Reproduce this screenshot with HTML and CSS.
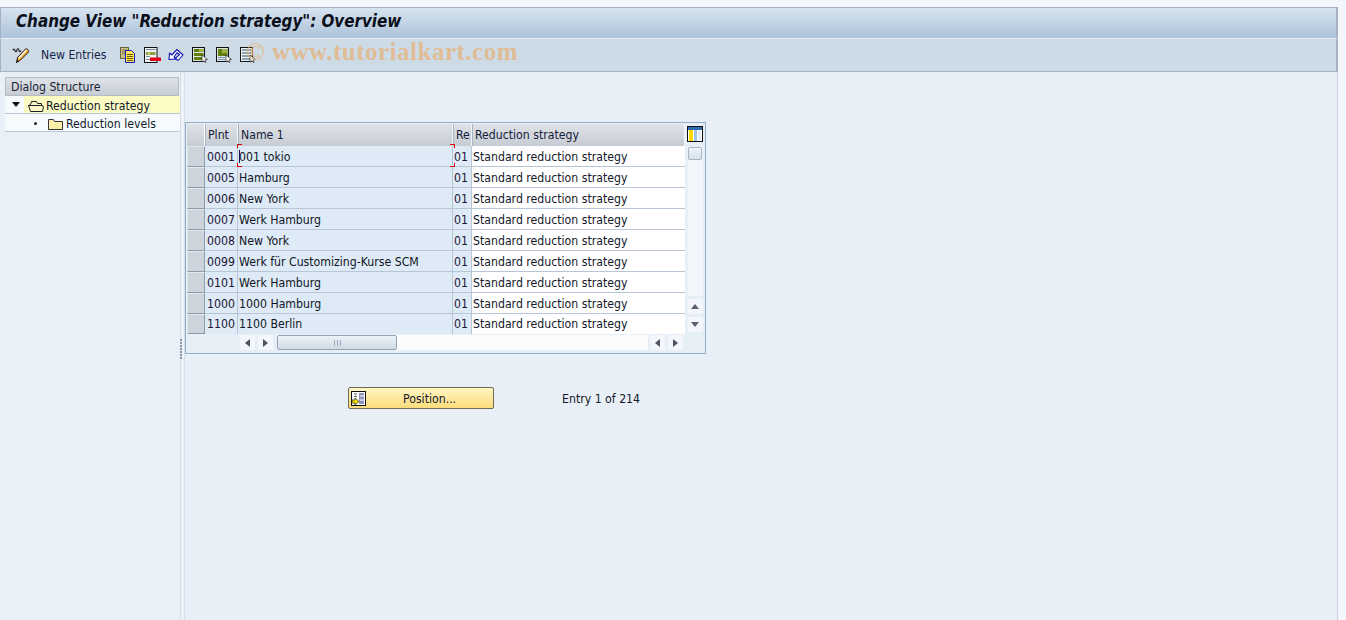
FILE: index.html
```html
<!DOCTYPE html>
<html lang="en">
<head>
<meta charset="utf-8">
<title>Change View "Reduction strategy": Overview</title>
<link rel="stylesheet" href="styles.css">
</head>
<body>
<div class="window">
  <header class="titlebar"><h1>Change View "Reduction strategy": Overview</h1></header>
  <div class="toolbar">
    <svg class="ico pencil" width="18" height="18" viewBox="0 0 18 18"><path d="M4.500 16.500l1-5 8-8.500c1-1 4 1.500 3 3l-8 8z" fill="#f7a928" stroke="#1a1a1a"/><path d="M6.500 11.500l7.500-8 1 1-7.500 8z" fill="#fff"/><path d="M4.500 16.500l.6-2.500 1.900 1.500z" fill="#111"/><path d="M1 4.500c0-2 1.500-2 2 0s1.500 1.500 2-.5 2-1.500 2 .5 1.500 1.500 2 0" fill="none" stroke="#222" stroke-width="1.100"/></svg>
    <span class="tool-label">New Entries</span>
    <svg class="ico first" width="16" height="16" viewBox="0 0 16 16"><rect x=".5" y=".5" width="8" height="11" fill="#c9c08a" stroke="#6a6236"/><path d="M2 3h5M2 5h5M2 7h5" stroke="#7f7640"/><path d="M5.500 3.500h6l3 3v9h-9z" fill="#fbe44e" stroke="#1414c8"/><path d="M7 7.500h6M7 9.500h6M7 11.500h6M7 13.500h6" stroke="#6a5c00"/></svg>
    <svg class="ico" width="17" height="16" viewBox="0 0 17 16"><rect x=".5" y=".5" width="12.500" height="15" fill="#f0f3f4" stroke="#111"/><path d="M2 2.500h9.500M2 9.500h4M2 12.500h4" stroke="#7b8a96"/><path d="M2 5h9.500v3H2z" fill="#8fa03a"/><path d="M4 5h2v3H4z" fill="#c4cf7a"/><rect x="6" y="10.500" width="11" height="3.500" fill="#e4001b"/></svg>
    <svg class="ico" width="16" height="16" viewBox="0 0 16 16"><path d="M1 12.500L1.500 6l2.300 2L9 2.500l6 5.500-5 5.500-2.500-2.200 4-3.800L9 5.700 6 10l2 2z" fill="#fff" stroke="#1414b4" stroke-width="1.100" stroke-linejoin="round"/></svg>
    <svg class="ico" width="16" height="16" viewBox="0 0 16 16"><rect x=".5" y=".5" width="12" height="14" fill="#dfe6ea" stroke="#111"/><path d="M2 2h9.500v3H2zM2 6h9.500v3H2zM2 10h9.500v3H2z" fill="#5f7f0c"/><path d="M7 2h4.500v3H7z" fill="#9db04a"/><path d="M10 8l5.500 4.500-2.500.3 1 2.700-2.500-1.500-1.500 1z" fill="#fff" stroke="#222" stroke-width=".7"/></svg>
    <svg class="ico" width="16" height="16" viewBox="0 0 16 16"><rect x=".5" y=".5" width="12" height="14" fill="#dfe6ea" stroke="#111"/><path d="M2 2h9.500v7H2z" fill="#5f7f0c"/><path d="M6 2h5.500v4H6z" fill="#9db04a"/><path d="M2 10.500h7M2 12.500h7" stroke="#7f95a8"/><path d="M10 8l5.500 4.500-2.500.3 1 2.700-2.500-1.500-1.500 1z" fill="#fff" stroke="#222" stroke-width=".7"/></svg>
    <svg class="ico" width="16" height="16" viewBox="0 0 16 16"><rect x=".5" y=".5" width="12" height="14" fill="#eef2f4" stroke="#111"/><path d="M2 2h9.500v2H2zM2 5h9.500v2H2zM2 8h9.500v2H2zM2 11h9.500v2H2z" fill="#8ea2b4"/><path d="M10 8l5.500 4.500-2.500.3 1 2.700-2.500-1.500-1.500 1z" fill="#fff" stroke="#222" stroke-width=".7"/></svg>
    <span class="watermark">© www.tutorialkart.com</span>
  </div>
  <div class="workspace">
    <aside class="tree">
      <div class="tree-head">Dialog Structure</div>
      <div class="tree-row selected">
        <span class="twisty"></span>
        <svg class="folder" width="16" height="13" viewBox="0 0 16 13"><path d="M2.500 11.500l-2-6 2-1 1-3h5l1 2h4v2l2 1-1 5z" fill="#fdf6c8" stroke="#222"/><path d="M.5 5.500h14" stroke="#222"/></svg>
        <span class="sel-label">Reduction strategy</span>
      </div>
      <div class="tree-row child">
        <span class="dot"></span>
        <svg class="folder" width="15" height="13" viewBox="0 0 15 13"><path d="M.5 11.500v-10h5l1 2h8v8z" fill="#fdf0a8" stroke="#333"/></svg>
        <span>Reduction levels</span>
      </div>
    </aside>
    <div class="splitter"><span class="grip"></span></div>
    <main class="content">
      <section class="tablebox">
        <div class="tbl">
          <div class="sel-col">
            <div class="sel-head"></div>
            <div class="sel-btn"></div><div class="sel-btn"></div><div class="sel-btn"></div><div class="sel-btn"></div><div class="sel-btn"></div><div class="sel-btn"></div><div class="sel-btn"></div><div class="sel-btn"></div><div class="sel-btn last"></div>
          </div>
          <div class="grid">
            <div class="th">Plnt</div><div class="th">Name 1</div><div class="th">Re</div><div class="th">Reduction strategy</div>
            <div class="td key">0001</div><div class="td key name focus">001 tokio<i class="caret"></i><i class="brackets"></i></div><div class="td key">01</div><div class="td val">Standard reduction strategy</div>
            <div class="td key">0005</div><div class="td key name">Hamburg</div><div class="td key">01</div><div class="td val">Standard reduction strategy</div>
            <div class="td key">0006</div><div class="td key name">New York</div><div class="td key">01</div><div class="td val">Standard reduction strategy</div>
            <div class="td key">0007</div><div class="td key name">Werk Hamburg</div><div class="td key">01</div><div class="td val">Standard reduction strategy</div>
            <div class="td key">0008</div><div class="td key name">New York</div><div class="td key">01</div><div class="td val">Standard reduction strategy</div>
            <div class="td key">0099</div><div class="td key name">Werk für Customizing-Kurse SCM</div><div class="td key">01</div><div class="td val">Standard reduction strategy</div>
            <div class="td key">0101</div><div class="td key name">Werk Hamburg</div><div class="td key">01</div><div class="td val">Standard reduction strategy</div>
            <div class="td key">1000</div><div class="td key name">1000 Hamburg</div><div class="td key">01</div><div class="td val">Standard reduction strategy</div>
            <div class="td key end">1100</div><div class="td key name end">1100 Berlin</div><div class="td key end">01</div><div class="td val end">Standard reduction strategy</div>
          </div>
          <div class="vscroll">
            <svg class="settings" width="16" height="16" viewBox="0 0 16 16"><rect x=".5" y=".5" width="15" height="15" fill="#fff" stroke="#111"/><rect x="1" y="1" width="14" height="3" fill="#2b6cb0"/><path d="M2 4h4v11H2z" fill="#ffd800"/><path d="M7 4h3v11H7z" fill="#9cc4e8"/><path d="M11 4h3v11h-3z" fill="#e4eef8"/></svg>
            <div class="thumb-v"></div>
            <div class="vtrack"></div>
            <div class="arrow-btn"><span class="tri up"></span></div>
            <div class="arrow-btn"><span class="tri down"></span></div>
          </div>
        </div>
        <div class="hscroll">
          <div class="arrow-btn h"><span class="tri left"></span></div>
          <div class="arrow-btn h"><span class="tri right"></span></div>
          <div class="htrack"><div class="thumb-h"><span class="dots"></span></div></div>
          <div class="arrow-btn h"><span class="tri left"></span></div>
          <div class="arrow-btn h"><span class="tri right"></span></div>
        </div>
      </section>
      <div class="actions">
        <button class="btn" type="button">
          <svg class="btn-ico" width="15" height="15" viewBox="0 0 15 15"><rect x=".5" y=".5" width="14" height="14" fill="#fff" stroke="#111"/><path d="M8 2h5v11H8z" fill="#8f94b8"/><path d="M9 5h4M9 9h4" stroke="#fff"/><path d="M3 3h3M3 5.500h3" stroke="#555"/><path d="M1 9h3V7l4 3.500-4 3.500v-2H1z" fill="#f6e000" stroke="#222" stroke-width=".7"/></svg>
          <span>Position...</span>
        </button>
        <span class="entry">Entry 1 of 214</span>
      </div>
    </main>
  </div>
</div>
</body>
</html>
```
FILE: styles.css
```css
* { box-sizing: border-box; }
html, body { margin: 0; height: 620px; overflow: hidden; }
body {
  background: #f3f6fb;
  font-family: "DejaVu Sans Condensed", "DejaVu Sans", sans-serif;
  font-size: 12.2px;
  color: #111a2a;
  padding: 7px 8px 0 0;
}
.window { height: 613px; display: flex; flex-direction: column; }
.titlebar {
  height: 32px;
  flex: none;
  background: linear-gradient(#d6e3f0, #acc3d9);
  border: 1px solid #a7b1c2;
  border-bottom: 1px solid #e8eff5;
  border-right-width: 2px;
  padding-left: 15px;
}
.titlebar h1 {
  margin: 0;
  font: italic bold 16.85px/26px "DejaVu Sans Condensed", "DejaVu Sans", sans-serif;
  color: #0b0f1a;
}
.toolbar {
  position: relative;
  height: 33px;
  flex: none;
  display: flex;
  align-items: center;
  background: #cddbe6;
  border: 1px solid #a7b1c2;
  border-top: 0;
  border-right-width: 2px;
  padding: 0 0 1px 11px;
}
.ico { flex: none; margin-right: 8px; display: block; }
.pencil { margin-right: 11px; }
.tool-label { width: 79px; color: #15244a; }
.ico:nth-of-type(3) { margin-right: 7px; }
.watermark {
  position: absolute;
  left: 245px;
  top: -1px;
  font: bold 25px/28px "Liberation Serif", serif;
  color: rgba(232, 176, 118, .72);
  white-space: nowrap;
  letter-spacing: .5px;
}
.workspace { flex: 1; display: flex; min-height: 0; }
.tree {
  width: 181px;
  flex: none;
  background: #eaf0f7;
  padding: 5px 0 0 5px;
  border-right: 1px solid #d5deea;
}
.tree-head {
  height: 19px;
  margin-right: 1px;
  background: linear-gradient(#dfe3e8, #c8cdd4);
  border: 1px solid #b4bcc8;
  padding-left: 5px;
  line-height: 18px;
  color: #1a2438;
}
.tree-row {
  height: 18px;
  display: flex;
  align-items: center;
  background: #f7fafd;
  border-bottom: 1px solid #b9c6d6;
  line-height: 17px;
  padding-top: 4px;
  white-space: nowrap;
}
.tree-row.selected { background: linear-gradient(90deg, #f7fafd 19px, #fdfbc4 19px); padding-left: 7px; }
.twisty { width: 0; height: 0; border: 4px solid transparent; border-top: 5px solid #111; border-bottom: 0; margin: -4px 8px 0 0; }
.selected .folder { margin-right: 2px; flex: none; }
.tree-row.child { padding-left: 29px; }
.dot { width: 3px; height: 3px; background: #222; border-radius: 50%; margin: -2px 11px 0 0; }
.child .folder { margin-right: 3px; flex: none; }
.splitter { width: 4px; flex: none; background: #eef3f9; position: relative; border-right: 1px solid #d5deea; }
.grip {
  position: absolute;
  left: -1px;
  top: 267px;
  width: 2px;
  height: 20px;
  background: repeating-linear-gradient(#8b97a8 0 2px, transparent 2px 3px);
}
.content { flex: 1; background: #e8eff6; padding: 50px 0 0 0; border-right: 1px solid #c6d2df; }
.tablebox {
  width: 521px;
  height: 232px;
  border: 1px solid #95adc8;
  background: #e6eef6;
  padding: 1px 0 0 1px;
}
.tbl { display: flex; height: 209px; }
.sel-col { width: 18px; flex: none; }
.sel-head { height: 22px; background: linear-gradient(#dfe3e8, #c6ccd3); border-right: 1px solid #fff; }
.sel-btn {
  height: 21px;
  background: #cdd4dc;
  border: 1px solid #e4e9ef;
  border-right-color: #8e9aa9;
  border-bottom-color: #8e9aa9;
}
.sel-btn.last { height: 20px; }
.grid {
  width: 480px;
  flex: none;
  display: grid;
  grid-template-columns: 33px 215px 19px 213px;
  grid-template-rows: 22px repeat(8, 21px) 20px;
}
.th {
  background: linear-gradient(#dfe3e8, #c6ccd3);
  border-right: 1px solid #f2f5f8;
  border-left: 1px solid #a9b4c1;
  padding-left: 2px;
  line-height: 22px;
  white-space: nowrap;
  overflow: hidden;
  color: #16203a;
}
.td {
  border-bottom: 1px solid #b7c5d5;
  border-right: 1px solid #b7c5d5;
  line-height: 20px;
  padding-top: 1px;
  white-space: nowrap;
  overflow: hidden;
  position: relative;
}
.td.end { border-bottom: 0; line-height: 19px; }
.key { background: #deeaf5; padding-left: 2px; color: #1c1436; }
.td:nth-child(4n+3) { padding-left: 1px; }
.name { padding-left: 1px; color: #0f1626; }
.val { background: #fff; padding-left: 1px; border-right: 0; color: #14182a; }
.focus { overflow: visible; z-index: 1; }
.caret { position: absolute; left: 1px; top: 4px; width: 1px; height: 13px; background: #10104a; }
.brackets {
  position: absolute;
  left: -1px;
  top: -2px;
  width: 218px;
  height: 23px;
  background-image:
    linear-gradient(#d8000f, #d8000f), linear-gradient(#d8000f, #d8000f),
    linear-gradient(#d8000f, #d8000f), linear-gradient(#d8000f, #d8000f),
    linear-gradient(#d8000f, #d8000f), linear-gradient(#d8000f, #d8000f),
    linear-gradient(#d8000f, #d8000f), linear-gradient(#d8000f, #d8000f);
  background-repeat: no-repeat;
  background-size: 5px 1px, 1px 4px, 5px 1px, 1px 4px, 5px 1px, 1px 4px, 5px 1px, 1px 4px;
  background-position: 0 0, 0 0, 100% 0, 100% 0, 0 100%, 0 100%, 100% 100%, 100% 100%;
}
.vscroll { width: 20px; flex: none; display: flex; flex-direction: column; align-items: center; padding: 2px 0 1px 0; }
.settings { flex: none; margin-bottom: 5px; }
.thumb-v { width: 14px; height: 13px; flex: none; background: linear-gradient(#f0f4f9, #d7e1ec); border: 1px solid #a9b6c6; border-radius: 2px; }
.vtrack { flex: 1; width: 15px; background: #f3f6fa; }
.arrow-btn { width: 15px; height: 15px; flex: none; background: #f3f6fa; display: flex; align-items: center; justify-content: center; margin-top: 3px; }
.tri { width: 0; height: 0; border: 4px solid transparent; display: block; }
.up { border-top: 0; border-bottom: 5px solid #5a6472; }
.down { border-bottom: 0; border-top: 5px solid #5a6472; }
.left { border-left: 0; border-right: 5px solid #4a5462; }
.right { border-right: 0; border-left: 5px solid #4a5462; }
.hscroll { display: flex; align-items: center; height: 15px; margin-top: 2px; padding-left: 53px; }
.arrow-btn.h { margin: 0 3px 0 0; }
.htrack { width: 371px; height: 15px; background: #fbfcfd; margin: 0 2px 0 1px; }
.thumb-h {
  width: 120px;
  height: 15px;
  background: linear-gradient(#eef3f8, #cfdbe7);
  border: 1px solid #97a4b4;
  border-radius: 2px;
  display: flex;
  align-items: center;
  justify-content: center;
}
.dots { width: 9px; height: 6px; background: radial-gradient(circle, #8b97a8 .8px, transparent .9px) 0 0 / 3px 2.5px; }
.actions { display: flex; align-items: center; margin-top: 33px; padding-left: 163px; }
.btn {
  width: 146px;
  height: 22px;
  padding: 0 0 0 2px;
  display: flex;
  align-items: center;
  background: linear-gradient(#fdf6c4, #fddc7c);
  border: 1px solid #6e6a55;
  border-radius: 2px;
  font: inherit;
  color: #14182a;
}
.btn-ico { flex: none; }
.btn span { margin-left: 37px; padding-top: 1px; }
.entry { margin-left: 68px; padding-top: 1px; color: #14182a; }
```
